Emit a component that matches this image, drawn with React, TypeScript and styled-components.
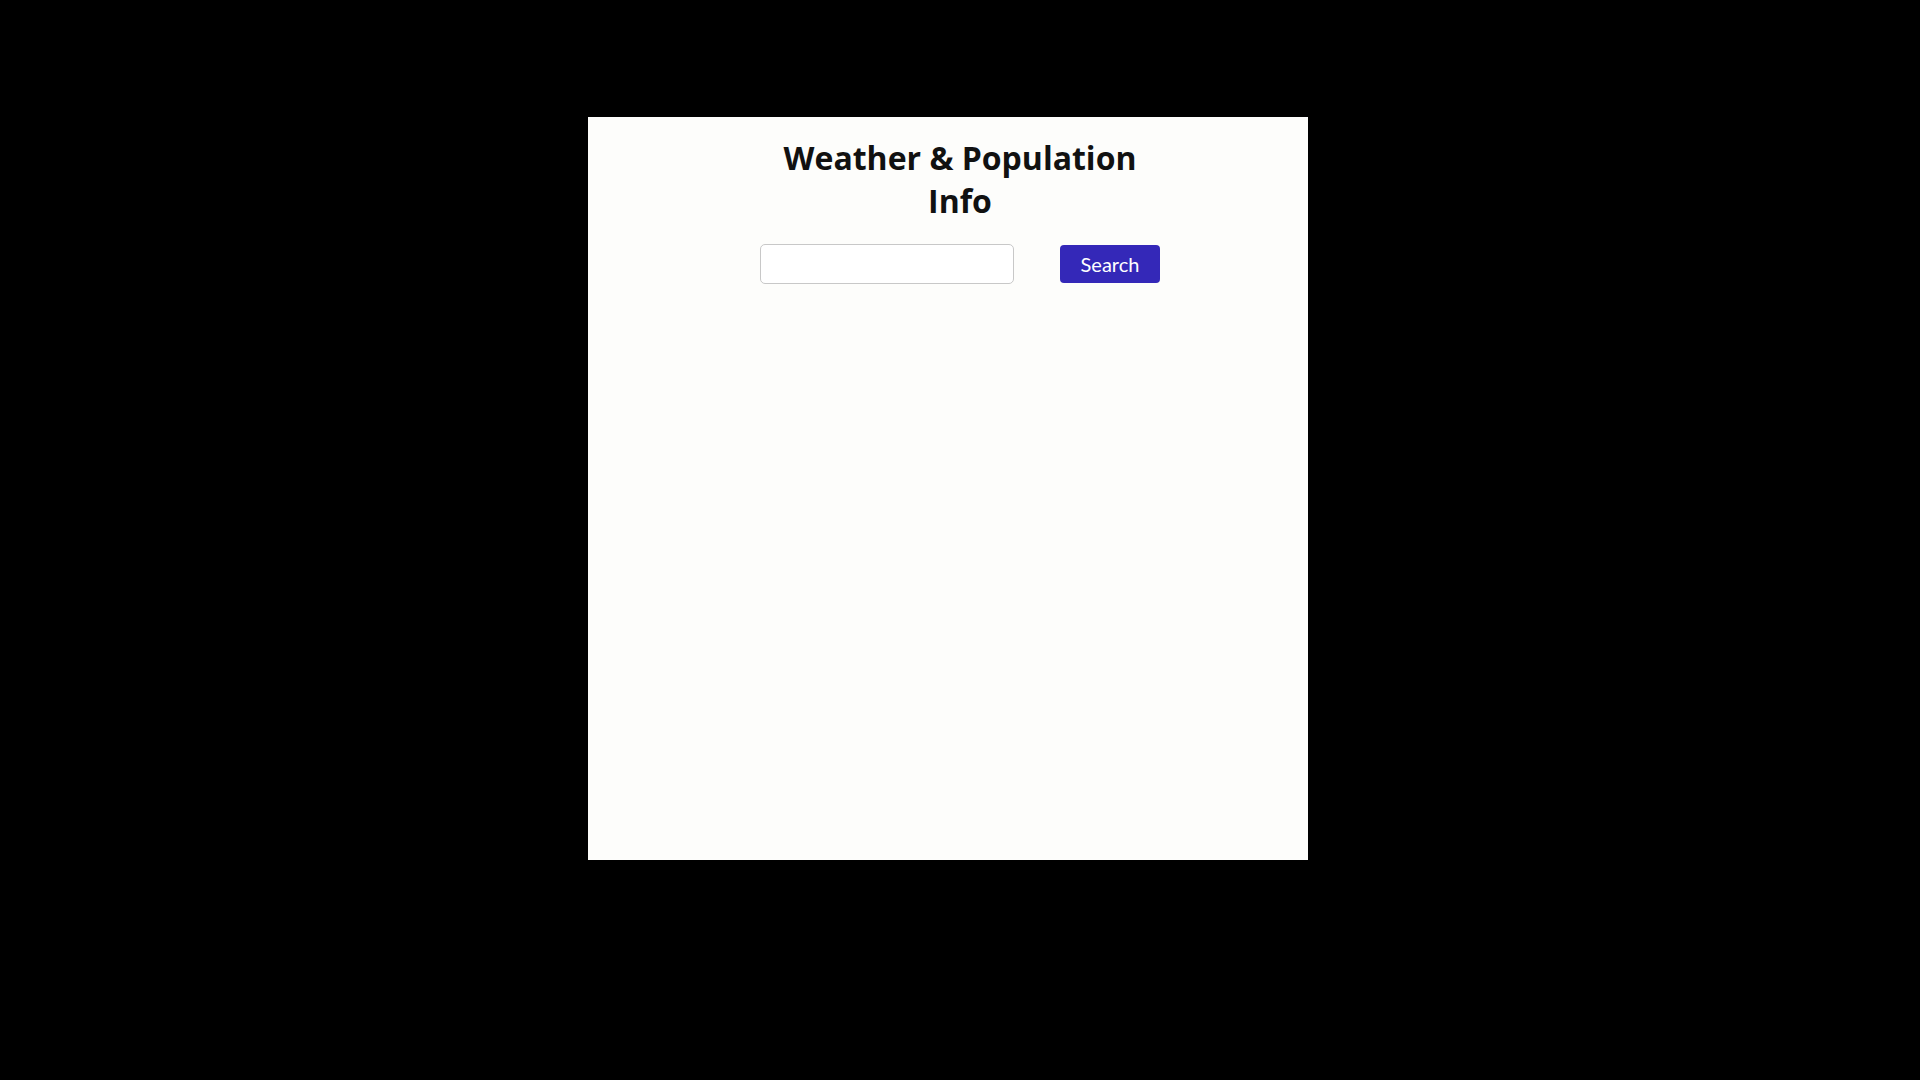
import React, { useState } from "react";
import styled, { createGlobalStyle } from "styled-components";

const GlobalStyle = createGlobalStyle`
    html, body {
        margin: 0;
        padding: 0;
        background: #000;
    }
    body {
        min-height: 1080px;
        font-family: "Open Sans", "Noto Sans", sans-serif;
    }
`

const Page = styled.div`
    padding-top: 117px;
    padding-left: 588px;
`

const Card = styled.main`
    width: 720px;
    height: 743px;
    box-sizing: border-box;
    background: #fdfdfb;
    padding: 19px 148px 0 172px;
`

const Column = styled.div`
    width: 400px;
    display: flex;
    flex-direction: column;
    align-items: center;
`

const Title = styled.h1`
    margin: 0;
    width: 400px;
    text-align: center;
    font-family: "Open Sans", sans-serif;
    font-weight: 700;
    font-size: 32px;
    line-height: 43px;
    color: #111;
`

const SearchRow = styled.form`
    margin-top: 22px;
    width: 400px;
    display: flex;
    justify-content: space-between;
    align-items: center;
`

const Input = styled.input`
    width: 254px;
    height: 40px;
    box-sizing: border-box;
    border: 1px solid #c8c8c8;
    border-radius: 5px;
    background: #fff;
    padding: 0 8px;
    font-size: 16px;
    outline: none;
`

const Button = styled.button`
    width: 100px;
    height: 38px;
    border: none;
    border-radius: 4px;
    background: #3428b8;
    color: #fff;
    font-family: "Lato", sans-serif;
    font-size: 20px;
    cursor: pointer;
`

const App = () => {
    const [city, setCity] = useState<string>("")

    return (
        <>
            <GlobalStyle />
            <Page>
                <Card>
                    <Column>
                        <Title>Weather &amp; Population Info</Title>
                        <SearchRow onSubmit={(e) => e.preventDefault()}>
                            <Input value={city} onChange={(e) => setCity(e.target.value)} />
                            <Button type="submit">Search</Button>
                        </SearchRow>
                    </Column>
                </Card>
            </Page>
        </>
    )
}

export default App
